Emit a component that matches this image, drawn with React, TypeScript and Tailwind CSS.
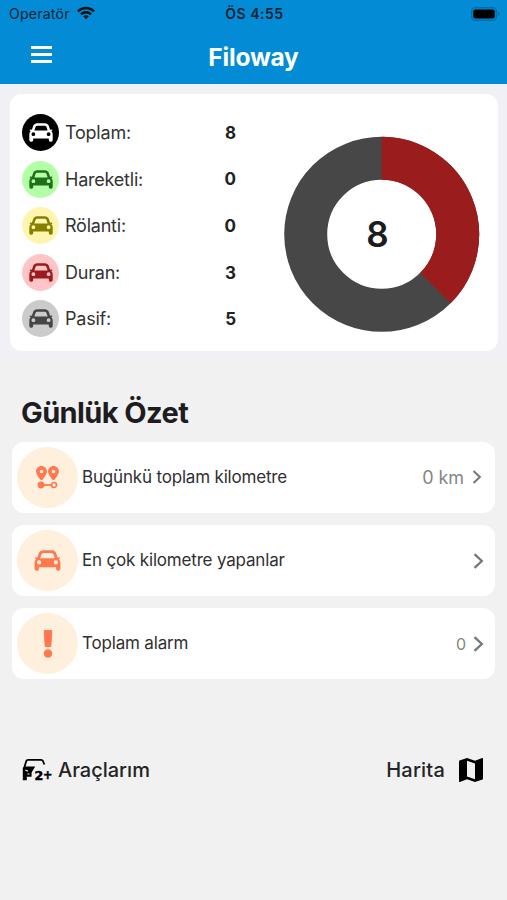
import React from 'react';
import { FaLocationDot } from 'react-icons/fa6';
import { MdMap } from 'react-icons/md';

interface VehicleStatus {
  label: string;
  count: number;
  circle: string;
  icon: string;
}

const statuses: VehicleStatus[] = [
  { label: 'Toplam:', count: 8, circle: 'bg-black', icon: 'text-white' },
  { label: 'Hareketli:', count: 0, circle: 'bg-[#b3ffa6]', icon: 'text-[#1d7018]' },
  { label: 'Rölanti:', count: 0, circle: 'bg-[#fff5ae]', icon: 'text-[#858000]' },
  { label: 'Duran:', count: 3, circle: 'bg-[#ffc5c6]', icon: 'text-[#9b1b1c]' },
  { label: 'Pasif:', count: 5, circle: 'bg-[#cbcbcb]', icon: 'text-[#454545]' },
];

const CarIcon = ({ className }: { className: string }) => (
  <svg className={className} viewBox="0 0 24 19" fill="currentColor">
    <path
      fillRule="evenodd"
      d="M8.4 0.3H15.6C18.2 0.3 19.4 1.6 20 3.4L21.1 6.8L22.7 6.5Q23.6 6.8 23.3 7.5L22.3 8.3Q23.7 9.5 23.7 11.3V17Q23.7 18.7 22 18.7H21.4Q19.8 18.7 19.8 17V15.6H4.2V17Q4.2 18.7 2.6 18.7H2Q0.3 18.7 0.3 17V11.3Q0.3 9.5 1.7 8.3L0.7 7.5Q0.4 6.8 1.3 6.5L2.9 6.8L4 3.4C4.6 1.6 5.8 0.3 8.4 0.3ZM8.4 2.8Q6.9 2.8 6.4 4.2L5.4 7.5H18.6L17.6 4.2Q17.1 2.8 15.6 2.8ZM4.4 9.3A1.9 1.9 0 1 0 4.4 13.1A1.9 1.9 0 1 0 4.4 9.3ZM19.6 9.3A1.9 1.9 0 1 0 19.6 13.1A1.9 1.9 0 1 0 19.6 9.3Z"
    />
  </svg>
);

const StatusBar = () => (
  <div className="h-7 pl-[9px] pr-[7px] grid grid-cols-3 items-center text-[#06202f]">
    <div className="flex items-center gap-[7px]">
      <span className="text-[14px] leading-4 tracking-[0.25px]">Operatör</span>
      <svg className="-mt-[2px]" width="18" height="14" viewBox="0 0 19 14" fill="none" stroke="#06121a" strokeWidth="2.7">
        <path d="M1 5.2C5.8 0.5 13.2 0.5 18 5.2" />
        <path d="M4.2 8.4C7.2 5.5 11.8 5.5 14.8 8.4" />
        <path d="M6.6 10.5C8.2 9 10.8 9 12.4 10.5L9.5 13.5Z" fill="#06121a" stroke="none" />
      </svg>
    </div>
    <span className="text-center text-[14px] leading-4 font-semibold tracking-[0.5px]">ÖS 4:55</span>
    <svg className="justify-self-end -mt-px" width="29" height="14" viewBox="0 0 29 14">
      <rect x="0.7" y="0.7" width="24.6" height="12.6" rx="3.5" fill="none" stroke="#056ca5" strokeWidth="1.4" />
      <rect x="2.3" y="2.5" width="21.4" height="9" rx="2" fill="#000" />
      <path d="M26.8 4.8C28.6 5.5 28.6 8.5 26.8 9.2Z" fill="#056ca5" />
    </svg>
  </div>
);

const Donut = () => (
  <div className="relative w-[196px] h-[196px] flex items-center justify-center">
    <svg className="absolute inset-0" width="196" height="196" viewBox="0 0 196 196">
      <circle cx="97.7" cy="98.3" r="76" fill="none" stroke="#474747" strokeWidth="43" />
      <path d="M97.7 22.3A76 76 0 0 1 151.44 152.04" fill="none" stroke="#9a1c1c" strokeWidth="43" />
    </svg>
    <span className="relative -left-[4.5px] text-[35px] font-semibold text-[#1c1c1e]">8</span>
  </div>
);

const RouteIcon = () => (
  <div className="flex flex-col items-center">
    <div className="flex gap-[1.5px]">
      <FaLocationDot className="w-[11px] h-[14.5px]" />
      <FaLocationDot className="w-[11px] h-[14.5px]" />
    </div>
    <svg className="mt-[1px]" width="21" height="8" viewBox="0 0 21 8">
      <circle cx="4" cy="4" r="3.4" fill="currentColor" />
      <path d="M6 4H14" stroke="currentColor" strokeWidth="1.8" />
      <circle cx="17" cy="4" r="2.5" fill="none" stroke="currentColor" strokeWidth="1.7" />
    </svg>
  </div>
);

const AlarmIcon = () => (
  <svg width="12" height="28" viewBox="0 0 12 28" fill="currentColor">
    <path d="M2.2 0.5H9.8L8.8 16.5H3.2Z" stroke="currentColor" strokeLinejoin="round" />
    <circle cx="6" cy="23.5" r="4.2" />
  </svg>
);

const VehiclesIcon = () => (
  <svg className="overflow-visible" width="31" height="24" viewBox="0 0 31 24">
    <path d="M2 10.5L4.3 3Q4.7 1.8 6 1.8H19Q20.5 1.8 21 3L22.3 6.5" fill="none" stroke="#000" strokeWidth="1.8" />
    <path
      fillRule="evenodd"
      d="M0.8 10L2.5 8.6H13.2L9.6 14.5V18.8H4.8V22.3H0.8ZM3.4 11.5V12.8L6 13.7V12.4ZM5.4 15.5V16.6H7.4V15.5Z"
    />
    <g className="font-['DejaVu_Sans']" fontWeight="700" fontSize="12.5">
      <text x="12.6" y="21.7" textLength="8.8" lengthAdjust="spacingAndGlyphs" stroke="#000" strokeWidth="0.5">2</text>
      <text x="21" y="21.4" textLength="9.4" lengthAdjust="spacingAndGlyphs" stroke="#000" strokeWidth="0.5">+</text>
    </g>
  </svg>
);

interface SummaryRowProps {
  icon: React.ReactNode;
  label: string;
  value?: React.ReactNode;
  small?: boolean;
}

const SummaryRow: React.FC<SummaryRowProps> = ({ icon, label, value, small }) => (
  <div className="h-[71px] bg-white rounded-xl flex items-center pl-[5px] pr-[11px]">
    <div className="w-[61px] h-[61px] rounded-full bg-[#fff0dd] text-[#ff7850] flex items-center justify-center">
      {icon}
    </div>
    <span className="ml-1 flex-1 text-[17px] tracking-[-0.18px] text-[#303030]">{label}</span>
    {value}
    <svg
      className={small ? 'ml-[8px] mr-[2px] -mt-px' : 'ml-[7px]'}
      width={small ? 10 : 11}
      height={small ? 14 : 16}
      viewBox="0 0 11 16"
      fill="none"
      stroke="#777"
      strokeWidth="2.3"
    >
      <path d="M1.5 1.2L8.8 8L1.5 14.8" />
    </svg>
  </div>
);

export default function App() {
  return (
    <div className="min-h-[900px] bg-[#f1f1f1] font-['Inter',sans-serif]">
      <header className="h-[84px] bg-[#038cd5]">
        <StatusBar />
        <div className="h-14 pt-[2px] grid grid-cols-[1fr_auto_1fr] items-center">
          <svg className="ml-[31px] -mt-[6px]" width="21" height="17" viewBox="0 0 21 17" fill="#fff">
            <rect width="21" height="3" y="0" />
            <rect width="21" height="3" y="7" />
            <rect width="21" height="3" y="14" />
          </svg>
          <h1 className="text-[24.5px] font-bold tracking-[-0.2px] text-white">Filoway</h1>
        </div>
      </header>

      <div className="bg-[#f1f1f5] pt-[10px] pb-2 pl-[10px] pr-[9px]">
        <section className="h-[257px] bg-white rounded-xl flex pl-3 pr-[18px] pt-5">
          <div className="w-[214px]">
            {statuses.map((s) => (
              <div key={s.label} className="h-[46.6px] flex items-start">
                <div className={`w-[37px] h-[37px] rounded-full flex items-center justify-center ${s.circle}`}>
                  <CarIcon className={`w-6 h-[19px] ${s.icon}`} />
                </div>
                <div className="ml-1.5 h-[37px] flex-1 flex items-center justify-between text-[18px]">
                  <span className="tracking-[-0.22px] text-[#333]">{s.label}</span>
                  <span className="pt-[2px] text-[17px] font-bold text-[#222]">{s.count}</span>
                </div>
              </div>
            ))}
          </div>
          <div className="ml-auto mt-[22px]">
            <Donut />
          </div>
        </section>
      </div>

      <main className="px-3">
        <h2 className="pl-[9px] mt-[34px] h-10 text-[29px] leading-10 font-bold tracking-[-0.6px] text-[#1d1d1f]">Günlük Özet</h2>
        <div className="mt-[9px] flex flex-col gap-3">
          <SummaryRow
            icon={<RouteIcon />}
            label="Bugünkü toplam kilometre"
            value={<span className="text-[18px] tracking-[-0.1px] text-[#858585]">0 km</span>}
            small
          />
          <SummaryRow icon={<CarIcon className="w-[27px] h-[21px]" />} label="En çok kilometre yapanlar" />
          <SummaryRow
            icon={<AlarmIcon />}
            label="Toplam alarm"
            value={<span className="text-[16px] text-[#858585]">0</span>}
          />
        </div>
      </main>

      <nav className="mt-[75px] pl-[22px] pr-[24px] h-8 flex items-center justify-between text-[20px] font-medium text-[#242424]">
        <div className="flex items-center gap-[5px]">
          <VehiclesIcon />
          <span>Araçlarım</span>
        </div>
        <div className="flex items-center gap-[10px]">
          <span className="tracking-[0.2px]">Harita</span>
          <MdMap className="w-8 h-8 -mr-1 text-black" />
        </div>
      </nav>
    </div>
  );
}
